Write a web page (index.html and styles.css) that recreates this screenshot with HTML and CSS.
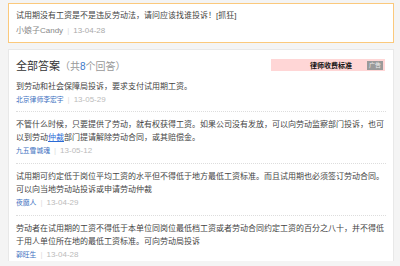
FILE: index.html
```html
<!DOCTYPE html>
<html lang="zh-CN">
<head>
    <meta charset="UTF-8">
    <title>试用期没有工资</title>
    <link rel="stylesheet" href="styles.css">
</head>
<body>
    <div class="page">
        <!-- Question -->
        <div class="question-box">
            <p class="question-title">试用期没有工资是不是违反劳动法，请问应该找谁投诉！[抓狂]</p>
            <p class="question-meta"><span class="asker">小娘子Candy</span><span class="sep">|</span><span class="date">13-04-28</span></p>
        </div>

        <!-- Answers -->
        <div class="answers-card">
            <div class="answers-head">
                <h2>全部答案<span class="count">（共<b>8</b>个回答）</span></h2>
                <div class="ad"><span class="ad-text">律师收费标准</span><span class="ad-tag">广告</span></div>
            </div>
            <ul class="answers">
                <li class="answer">
                    <p class="answer-text">到劳动和社会保障局投诉，要求支付试用期工资。</p>
                    <p class="answer-meta"><a class="user">北京律师李宏宇</a><span class="sep">|</span><span class="date">13-05-29</span></p>
                </li>
                <li class="answer">
                    <p class="answer-text">不管什么时候，只要提供了劳动，就有权获得工资。如果公司没有发放，可以向劳动监察部门投诉，也可以到劳动<a class="link">仲裁</a>部门提请解除劳动合同，或其赔偿金。</p>
                    <p class="answer-meta"><a class="user">九五雪城魂</a><span class="sep">|</span><span class="date">13-05-12</span></p>
                </li>
                <li class="answer">
                    <p class="answer-text">试用期可约定低于岗位平均工资的水平但不得低于地方最低工资标准。而且试用期也必须签订劳动合同。可以向当地劳动站投诉或申请劳动仲裁</p>
                    <p class="answer-meta"><a class="user">夜魔人</a><span class="sep">|</span><span class="date">13-04-29</span></p>
                </li>
                <li class="answer">
                    <p class="answer-text">劳动者在试用期的工资不得低于本单位同岗位最低档工资或者劳动合同约定工资的百分之八十，并不得低于用人单位所在地的最低工资标准。可向劳动局投诉</p>
                    <p class="answer-meta"><a class="user">郭旺生</a><span class="sep">|</span><span class="date">13-04-28</span></p>
                </li>
            </ul>
        </div>
    </div>
</body>
</html>
```

FILE: styles.css
```css
body {
    margin: 0;
    background: #f4f4f4;
    font-family: "Liberation Sans", "Noto Sans CJK SC", sans-serif;
    color: #333;
}
p, ul, h2 {
    margin: 0;
    padding: 0;
}
.page {
    width: 386px;
    padding: 3px 0 0 8px;
}
.question-box {
    background: #fff;
    border: 1px solid #fbc97c;
    padding: 6px 7px 5px 7px;
}
.question-title {
    font-size: 8px;
    line-height: 12px;
    color: #444;
}
.question-meta {
    margin-top: 2px;
    font-size: 8px;
    line-height: 13px;
    color: #888;
}
.question-meta .date {
    color: #aaa;
}
.sep {
    color: #ddd;
    margin: 0 4px;
}
.answers-card {
    margin-top: 6px;
    background: #fff;
    border: 1px solid #e8e8e8;
    border-bottom: none;
    padding: 9px 7px 0 7px;
}
.answers-head {
    display: flex;
    justify-content: space-between;
    align-items: flex-start;
}
.answers-head h2 {
    font-size: 11px;
    line-height: 14px;
    font-weight: normal;
    color: #333;
}
.count {
    font-size: 10px;
    color: #999;
}
.count b {
    font-weight: normal;
    color: #3b78c8;
}
.ad {
    width: 114px;
    height: 12px;
    margin-right: 1px;
    background: #ffd6d6;
    display: flex;
    align-items: center;
    justify-content: flex-end;
}
.ad-text {
    font-size: 7px;
    font-weight: bold;
    color: #111;
    margin-right: 15px;
}
.ad-tag {
    font-size: 6px;
    line-height: 9px;
    padding: 0 2px;
    margin-right: 2px;
    background: #9a9a9a;
    color: #eee;
}
.answers {
    list-style: none;
    margin-top: 6px;
}
.answer {
    padding: 6px 0 6px 0;
    border-top: 1px dotted #ddd;
}
.answer:first-child {
    border-top: none;
    padding-top: 0;
    padding-bottom: 5px;
}
.answer:last-child {
    padding-bottom: 0;
}
.answer-text {
    font-size: 8px;
    line-height: 13px;
    color: #444;
    width: 368px;
}
.link {
    color: #2a6bd6;
    text-decoration: underline;
}
.answer-meta {
    font-size: 8px;
    line-height: 13px;
}
.user {
    font-size: 6.8px;
    color: #3b6fc0;
}
.answer-meta .date {
    color: #bbb;
}
```
